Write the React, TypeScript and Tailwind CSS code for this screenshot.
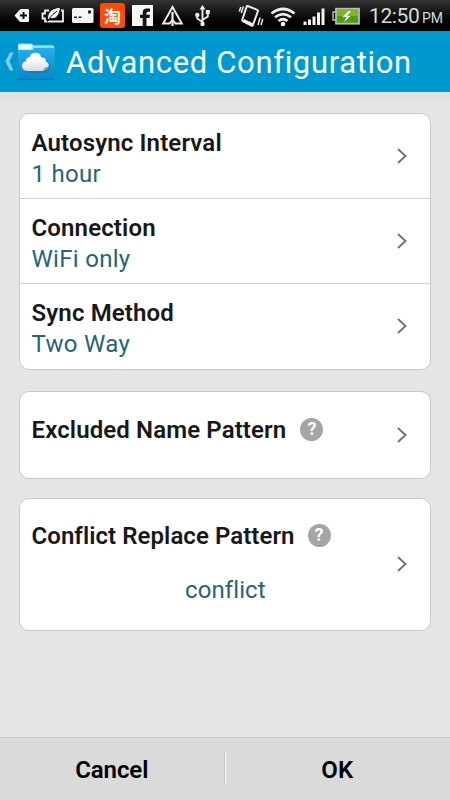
import type { ReactNode } from 'react';

function Slot({ x, w, children }: { x: number; w: number; children: ReactNode }) {
  return (
    <svg className="shrink-0" width={w} height={31} viewBox={`${x} 0 ${w} 31`} fill="none">
      {children}
    </svg>
  );
}

function StatusBar() {
  return (
    <div className="flex h-[31px] shrink-0 items-start bg-linear-to-b from-[#353535] to-black">
      <Slot x={0} w={34}>
        <path d="M14.500 15.500l5-5.500Q20 9 21 9h7q1 0 1 1v11q0 1-1 1h-7q-1 0-1.500-.6z" fill="#f4f4f4" />
        <path d="M20 15.500h7M23.500 12v7" stroke="#111" strokeWidth="2" />
      </Slot>
      <Slot x={34} w={34}>
        <path d="M49 10.500h-4v3h-2.500v5h2.500v3h18v-11h-2" stroke="#eee" strokeWidth="1.800" />
        <path d="M47.500 20.500C47 13 50 8.500 60.500 7 60 15 56 20 50 18.500z" fill="#f4f4f4" stroke="#151515" strokeWidth="1" />
        <path d="M47 22Q50 16 57 11" stroke="#222" strokeWidth="1" />
      </Slot>
      <Slot x={68} w={29}>
        <rect x="72" y="8" width="21.500" height="15" rx="1.500" fill="#f6f6f6" />
        <path d="M88 10.500h3v3h-3zM74 16.500h3v1.500h-3zM78.500 16.500h3v1.500h-3z" fill="#222" />
      </Slot>
      <div className="mx-[3px] mt-[3px] flex h-[25px] w-[25px] items-center justify-center rounded-[3px] bg-[#ff4b05] pb-[1px] font-['Noto_Sans_CJK_SC',sans-serif] text-[17px] leading-none font-bold text-white">
        淘
      </div>
      <Slot x={128} w={30}>
        <path d="M132 5h21v21h-21z" fill="#f7f7f7" />
        <path d="M150 8.500v3.300h-2.200q-1.300 0-1.300 1.500v1.500h3.500l-.5 3.200h-3v8h-3.800v-8H140v-3.200h2.700V12.500q0-4 4-4z" fill="#161616" />
      </Slot>
      <Slot x={158} w={30}>
        <path d="M172.500 7l9.300 16.500h-18.600z" stroke="#eee" strokeWidth="1.900" />
        <path d="M168.500 26l4-4.500 4 4.500z" fill="#111" />
        <path d="M168.500 24l4-4 4 4" stroke="#eee" strokeWidth="1.600" />
        <path d="M172.500 12v14" stroke="#eee" strokeWidth="2.200" />
      </Slot>
      <Slot x={188} w={46}>
        <path d="M202.500 8v16M202.500 22l-5.300-3.500v-3M202.500 20l5.300-3.500v-4" stroke="#eee" strokeWidth="1.900" />
        <path d="M202.500 5l3 4.500h-6z" fill="#eee" />
        <circle cx="202.500" cy="24" r="2.200" fill="#eee" />
        <circle cx="197.300" cy="15" r="2.200" fill="#eee" />
        <path d="M205.800 10h4v4h-4z" fill="#eee" />
      </Slot>
      <Slot x={234} w={34}>
        <g stroke="#eee">
          <path d="M247.500 6l9.800 3.800q.9.500.6 1.400l-5 14q-.4.900-1.300.5l-8.800-4.600q-.8-.5-.5-1.400l4.300-13q.2-.8.900-.7z" strokeWidth="2" />
          <path d="M243.300 20.500l9 4.300" strokeWidth="3.200" />
          <path d="M243.300 6.500l-2 6.500M240.800 7l-1.500 4.500M260.200 17.500l-2.200 7.500M262.800 19l-1.800 6" strokeWidth="1.500" />
        </g>
      </Slot>
      <Slot x={268} w={33}>
        <g stroke="#eee" strokeWidth="2.700">
          <path d="M271.500 13.500q11.500-9 23 0M275 17.300q8-6.500 16 0M278.500 21q4.500-3.500 9 0" />
        </g>
        <circle cx="283" cy="24" r="2.300" fill="#f5f5f5" />
      </Slot>
      <Slot x={301} w={28}>
        <path d="M303.500 21.500h3v3.500h-3zM308 19.500h3v5.500h-3zM312.500 16.500h3V25h-3zM317 12.500h3V25h-3zM321.500 8.500h3V25h-3z" fill="#f3f3f3" />
      </Slot>
      <Slot x={329} w={40}>
        <path d="M336 12h-3v8h3" stroke="#999" strokeWidth="1.800" />
        <rect x="336" y="8.700" width="23" height="15" fill="#4f9e12" stroke="#bbb" strokeWidth="1.800" />
        <path d="M337 9.500h21V16h-21z" fill="#75b82d" />
        <path d="M348.500 11l-6 6h4l-2.500 5 6.500-6H347l4-5z" fill="#fff" />
      </Slot>
      <div className="flex h-[31px] items-baseline pt-[4px] font-[Roboto,sans-serif] leading-[24px] whitespace-nowrap text-[#d9d9d9]">
        <span className="w-[53px] text-[21px] tracking-[-0.400px]">12:50</span>
        <span className="text-[14px]">PM</span>
      </div>
    </div>
  );
}

function Header() {
  return (
    <header className="flex h-[61px] shrink-0 items-center border-b border-[#2689ac] bg-[#0099cf]">
      <svg className="shrink-0" width="65" height="60" viewBox="0 31 65 60" fill="none">
        <defs>
          <linearGradient id="folder" x2="0" y2="1">
            <stop stopColor="#25b0ea" />
            <stop offset="1" stopColor="#0886c6" />
          </linearGradient>
          <linearGradient id="cloud" x2="0" y2="1">
            <stop offset=".3" stopColor="#fff" />
            <stop offset="1" stopColor="#d7dadd" />
          </linearGradient>
        </defs>
        <path d="M10 52.500h3.500L9.500 61.500l4 9H10L5.300 61.500z" fill="#80cce7" />
        <path d="M18 45q0-1.500 1.500-1.500h12q1.300 0 1.800 1.700h19q2 0 2 2v5H18z" fill="#8fdcf5" />
        <path d="M18.500 44.500h13.800v5H18.500z" fill="#e8faff" />
        <path d="M18 50h14.500l1.500-2h20.500v31q0 1-1 1h-34.500q-1 0-1-1z" fill="url(#folder)" />
        <path d="M18.500 79.500h35.500" stroke="#0774ab" strokeWidth="1.200" />
        <path
          d="M28 72.500q-5.500 0-5.500-5 .5-4 5-4 .5-10 8-10 5 0 7 5 6 .5 5.500 6 3 3.500-4 8z"
          transform="translate(1.500 .8)"
          fill="#075f94"
          opacity=".3"
        />
        <path
          d="M28 71q-6 0-6-5 .2-4.300 4-4.700 0-4 3.800-4.300 1.200-4.200 5.700-4.200 4.800 0 6 4.700 4.500-.3 4.500 4 3.500 1.500 2.500 5l-5.500 4.500z"
          fill="url(#cloud)"
        />
        <path d="M48.700 66.500q-1 4-5.700 4.500 1-4.200 5.700-4.500z" fill="#8f989e" />
      </svg>
      <h1 className="pt-[3px] pl-px font-[Roboto,sans-serif] text-[31px] leading-[40px] tracking-[0.660px] whitespace-nowrap text-[#f4fcff]">
        Advanced Configuration
      </h1>
    </header>
  );
}

function Chevron() {
  return (
    <svg className="shrink-0" width="12" height="18" viewBox="0 0 12 18" fill="none">
      <path d="M2 2l7.500 7L2 16" stroke="#737373" strokeWidth="1.900" />
    </svg>
  );
}

function Help() {
  return (
    <span className="flex h-[23px] w-[23px] items-center justify-center rounded-full bg-[#a5a5a5] text-[18px] leading-none font-bold text-white">
      ?
    </span>
  );
}

const settings = [
  { title: 'Autosync Interval', value: '1 hour' },
  { title: 'Connection', value: 'WiFi only' },
  { title: 'Sync Method', value: 'Two Way' },
];

export default function App() {
  return (
    <div className="flex h-[800px] w-[450px] flex-col overflow-hidden bg-[#e5e5e5] font-[Roboto,sans-serif]">
      <StatusBar />
      <Header />
      <main className="flex flex-1 flex-col bg-linear-to-b from-[#dedede] to-[#e5e5e5] to-[12px] px-[19px] pt-[21px]">
        <section className="h-[257px] shrink-0 rounded-[10px] border border-[#c9c9c9] bg-white">
          {settings.map((s) => (
            <div
              key={s.title}
              className="flex h-[85px] items-center justify-between border-b border-[#d0d0d0] pr-[22px] pl-[11.500px] last:border-transparent"
            >
              <div className="pt-[5px]">
                <div className="text-[24px] leading-[31px] font-semibold tracking-[0.140px] text-[#181818]">{s.title}</div>
                <div className="text-[24px] leading-[31px] tracking-[0.300px] text-[#286478]">{s.value}</div>
              </div>
              <Chevron />
            </div>
          ))}
        </section>
        <section className="mt-[21px] flex h-[88px] shrink-0 items-center justify-between rounded-[10px] border border-[#c9c9c9] bg-white pr-[22px] pl-[11.500px]">
          <div className="flex items-center gap-[14px] pb-[12px]">
            <span className="relative top-px text-[24px] leading-[31px] font-semibold tracking-[0.120px] text-[#181818]">
              Excluded Name Pattern
            </span>
            <Help />
          </div>
          <Chevron />
        </section>
        <section className="mt-[19px] flex h-[133px] shrink-0 items-center justify-between rounded-[10px] border border-[#c9c9c9] bg-white pr-[22px] pb-px pl-[11.500px]">
          <div className="flex w-[380px] flex-col pb-[2px]">
            <div className="flex items-center gap-[13px]">
              <span className="text-[24px] leading-[31px] font-semibold tracking-[0.060px] text-[#181818]">
                Conflict Replace Pattern
              </span>
              <div className="-mt-[2px]">
                <Help />
              </div>
            </div>
            <div className="mt-[23px] pl-[153.500px] text-[24px] leading-[31px] tracking-[0.100px] text-[#286478] [font-variant-ligatures:none]">
              conflict
            </div>
          </div>
          <Chevron />
        </section>
      </main>
      <footer className="flex h-[63px] shrink-0 items-center border-t border-[#c8c8c8] bg-[#dadada] text-[24px] font-semibold text-black">
        <div className="flex-1 pt-[2px] text-center tracking-[-0.100px]">Cancel</div>
        <div className="h-[32px] w-[2px] border-l border-[#c4c4c4] bg-white" />
        <div className="flex-1 pt-[2px] pr-px text-center">OK</div>
      </footer>
    </div>
  );
}
